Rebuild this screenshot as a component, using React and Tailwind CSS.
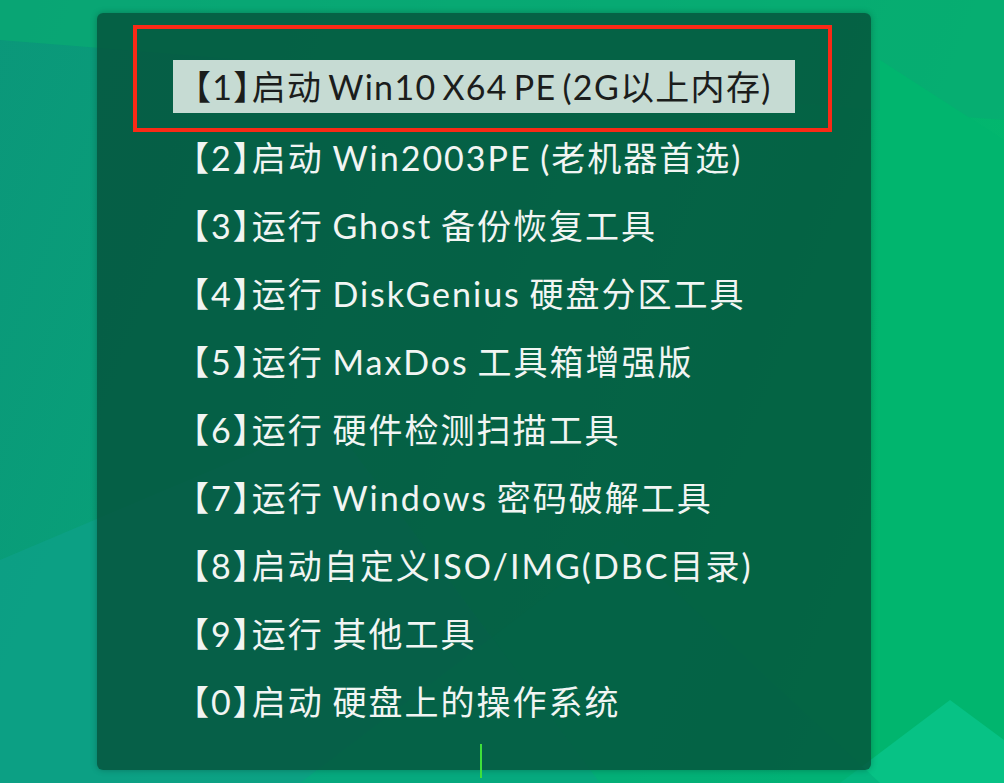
import React from 'react';

const items = [
    ['2', '启动 Win2003PE (老机器首选)'],
    ['3', '运行 Ghost 备份恢复工具'],
    ['4', '运行 DiskGenius 硬盘分区工具'],
    ['5', '运行 MaxDos 工具箱增强版'],
    ['6', '运行 硬件检测扫描工具'],
    ['7', '运行 Windows 密码破解工具'],
    ['8', '启动自定义ISO/IMG(DBC目录)'],
    ['9', '运行 其他工具'],
    ['0', '启动 硬盘上的操作系统'],
];

// 【】 are set half-width (halt) like the boot menu's font
function Label({ num, text }) {
    return (
        <span className="whitespace-nowrap">
            <span className="[font-feature-settings:'halt']">【</span>
            {num}
            <span className="[font-feature-settings:'halt']">】</span>
            {text}
        </span>
    );
}

function Backdrop() {
    return (
        <svg className="absolute inset-0" width="1004" height="783" viewBox="0 0 1004 783">
            <defs>
                <linearGradient id="base" x1="0" y1="0" x2="1" y2="0.3">
                    <stop offset="0" stopColor="#0b977a" />
                    <stop offset="0.55" stopColor="#06a776" />
                    <stop offset="1" stopColor="#02b86d" />
                </linearGradient>
            </defs>
            <rect width="1004" height="783" fill="url(#base)" />
            <polygon points="0,0 1004,0 1004,120 0,40" fill="#08ab72" opacity="0.7" />
            <polygon points="880,60 1004,140 1004,783 880,783" fill="#01b56e" />
            <polygon points="0,560 330,420 600,783 0,783" fill="#0ea087" opacity="0.8" />
            <polygon points="840,783 950,700 1004,740 1004,783" fill="#07c285" />
            <polygon points="300,783 620,540 880,783" fill="#04ad7c" opacity="0.6" />
        </svg>
    );
}

export default function App() {
    return (
        <div
            className="relative w-[1004px] h-[783px] overflow-hidden text-[34px] tracking-[2px] [word-spacing:-2px]"
            style={{ fontFamily: 'Lato, "Noto Sans CJK SC", sans-serif' }}
        >
            <Backdrop />
            <div className="relative ml-[97px] mt-[13px] w-[774px] h-[757px] rounded-md bg-[#05503a]/80 shadow-[0_0_6px_rgba(0,0,0,0.25)] pt-[12px] pl-[36px]">
                <div className="w-[699px] h-[107px] border-4 border-[#fa2a16] pt-[31px] pl-[36px]">
                    <div className="w-[622px] h-[53px] bg-[#c6dbd3] pl-[21px] flex items-center text-[#1b1d1c] tracking-[1.3px] [word-spacing:-4px]">
                        <Label num="1" text="启动 Win10 X64 PE (2G以上内存)" />
                    </div>
                </div>
                <div className="flex flex-col gap-[24px] mt-[3px] pl-[59px] text-[#f1f5f3]">
                    {items.map(([n, t]) => (
                        <div key={n} className="h-[44px] flex items-center">
                            <Label num={n} text={t} />
                        </div>
                    ))}
                </div>
                <div className="absolute left-[383px] bottom-[-8px] w-[2px] h-[34px] bg-[#3fe03a]" />
            </div>
        </div>
    );
}
